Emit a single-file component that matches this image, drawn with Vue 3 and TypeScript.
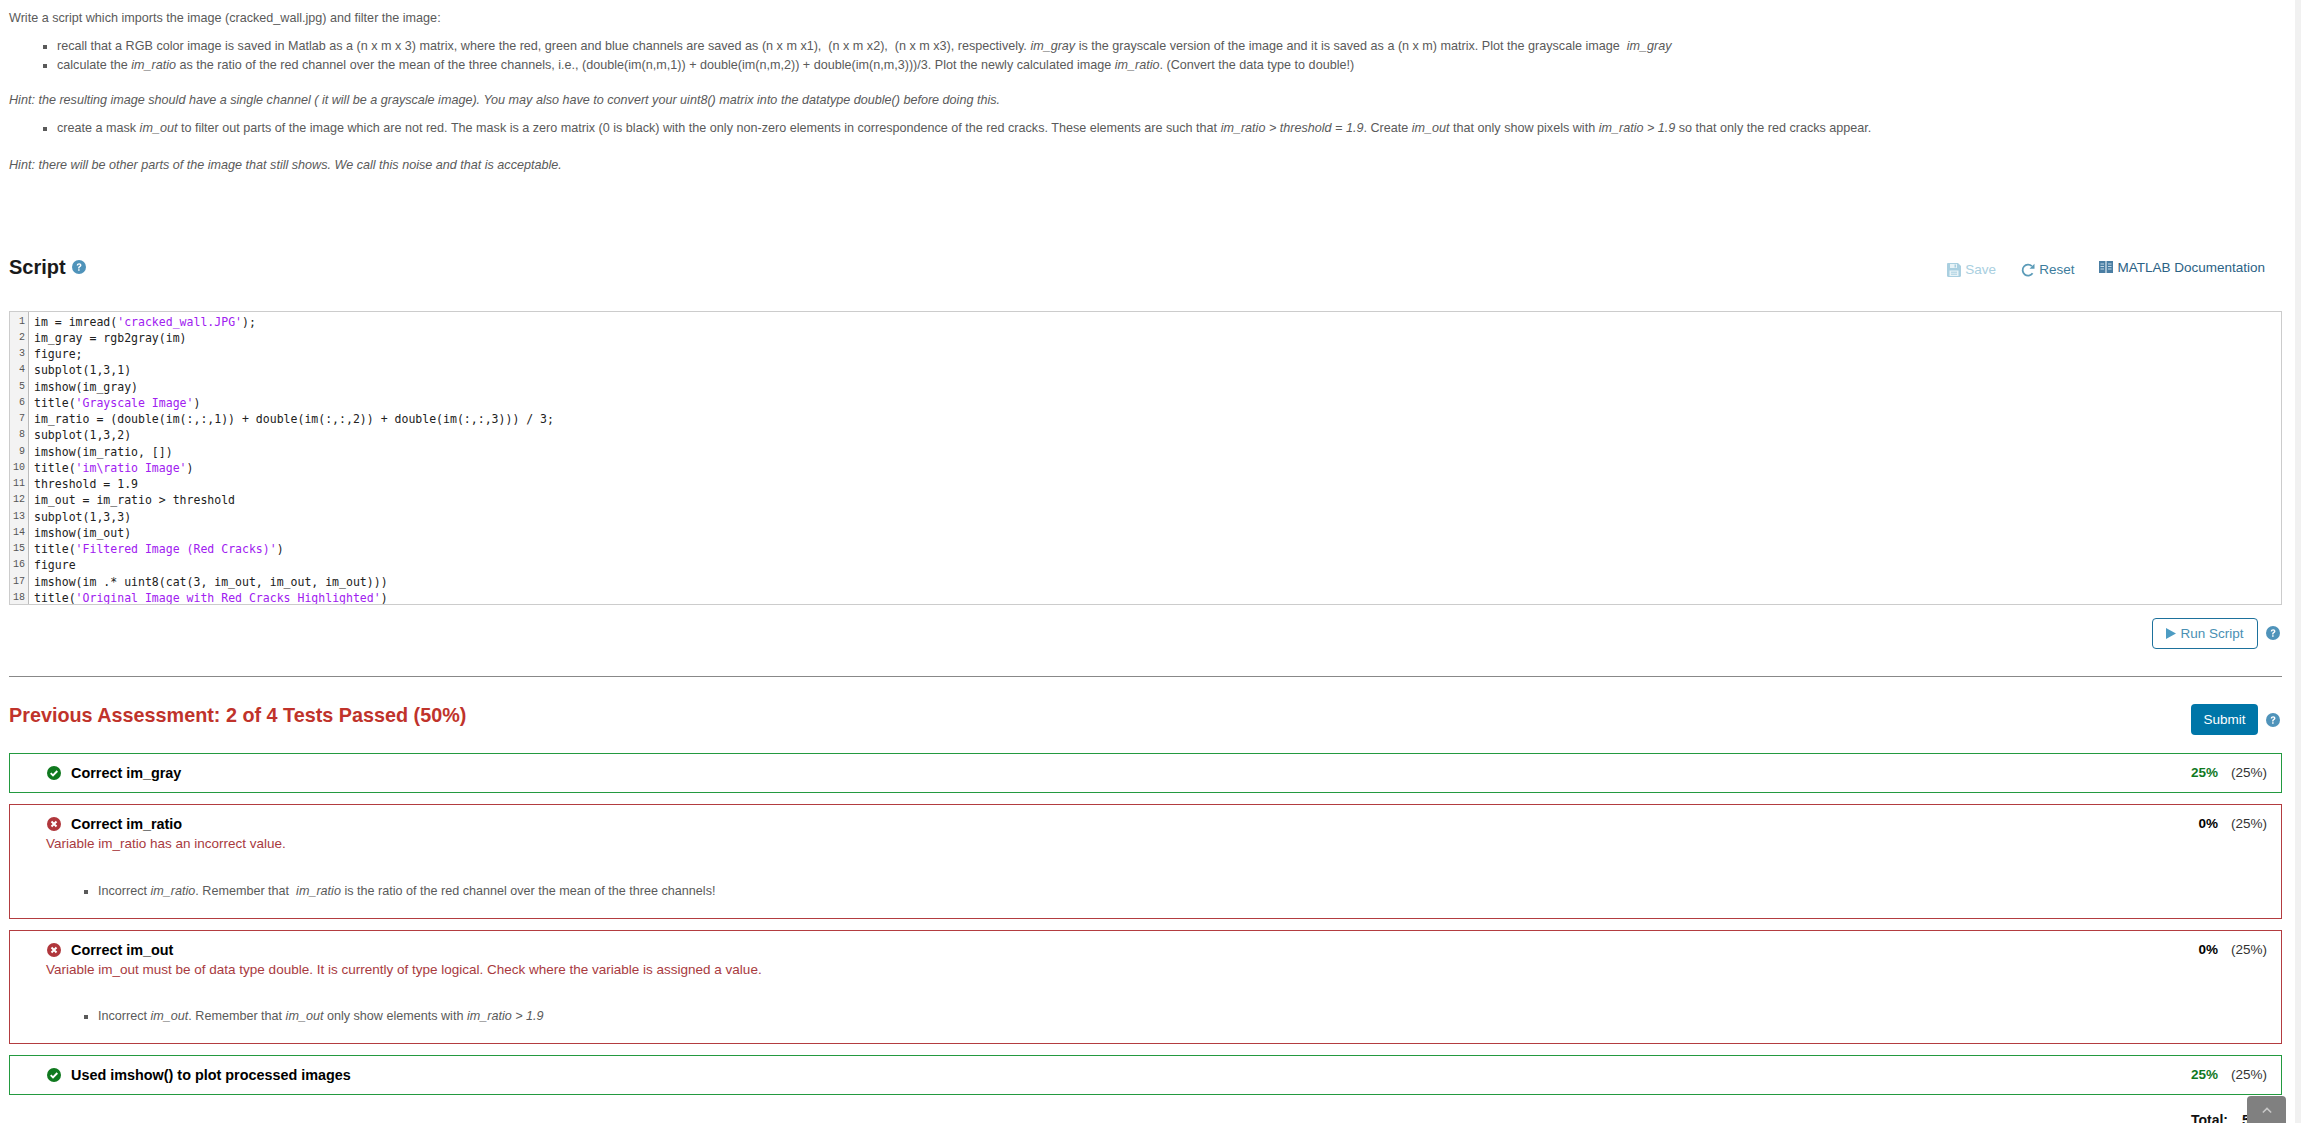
<script setup lang="ts">
const code: [string, string, string][] = [
  ["im = imread(", "'cracked_wall.JPG'", ");"],
  ["im_gray = rgb2gray(im)", "", ""],
  ["figure;", "", ""],
  ["subplot(1,3,1)", "", ""],
  ["imshow(im_gray)", "", ""],
  ["title(", "'Grayscale Image'", ")"],
  ["im_ratio = (double(im(:,:,1)) + double(im(:,:,2)) + double(im(:,:,3))) / 3;", "", ""],
  ["subplot(1,3,2)", "", ""],
  ["imshow(im_ratio, [])", "", ""],
  ["title(", "'im\\ratio Image'", ")"],
  ["threshold = 1.9", "", ""],
  ["im_out = im_ratio > threshold", "", ""],
  ["subplot(1,3,3)", "", ""],
  ["imshow(im_out)", "", ""],
  ["title(", "'Filtered Image (Red Cracks)'", ")"],
  ["figure", "", ""],
  ["imshow(im .* uint8(cat(3, im_out, im_out, im_out)))", "", ""],
  ["title(", "'Original Image with Red Cracks Highlighted'", ")"],
];
</script>

<template>
  <div class="page">
    <section class="prompt">
      <p class="intro">Write a script which imports the image (cracked_wall.jpg) and filter the image:</p>
      <ul class="list first">
        <li>recall that a RGB color image is saved in Matlab as a (n x m x 3) matrix, where the red, green and blue channels are saved as (n x m x1),&nbsp; (n x m x2),&nbsp; (n x m x3), respectively. <i>im_gray</i> is the grayscale version of the image and it is saved as a (n x m) matrix. Plot the grayscale image&nbsp; <i>im_gray</i></li>
        <li>calculate the <i>im_ratio</i> as the ratio of the red channel over the mean of the three channels, i.e., (double(im(n,m,1)) + double(im(n,m,2)) + double(im(n,m,3)))/3. Plot the newly calculated image <i>im_ratio</i>. (Convert the data type to double!)</li>
      </ul>
      <p class="hint"><i>Hint: the resulting image should have a single channel ( it will be a grayscale image). You may also have to convert your uint8() matrix into the datatype double() before doing this.</i></p>
      <ul class="list second">
        <li>create a mask <i>im_out</i> to filter out parts of the image which are not red. The mask is a zero matrix (0 is black) with the only non-zero elements in correspondence of the red cracks. These elements are such that <i>im_ratio &gt; threshold = 1.9</i>. Create <i>im_out</i> that only show pixels with <i>im_ratio &gt; 1.9</i> so that only the red cracks appear.</li>
      </ul>
      <p class="hint last"><i>Hint: there will be other parts of the image that still shows. We call this noise and that is acceptable.</i></p>
    </section>

    <header class="script-head">
      <h2 class="script-title">Script
        <svg class="help small" viewBox="0 0 16 16"><circle cx="8" cy="8" r="8" /><path d="M5.4 6.2C5.5 4.6 6.6 3.7 8.2 3.7c1.5 0 2.6.9 2.6 2.2 0 1-.5 1.5-1.4 2.1-.6.4-.8.7-.8 1.3v.3H7v-.5c0-.9.3-1.4 1.1-2 .7-.5 1-.8 1-1.2 0-.5-.4-.8-1-.8s-1 .4-1.1 1.1zM7 10.7h1.7v1.7H7z" fill="#fff" /></svg>
      </h2>
      <div class="tools">
        <span class="tool save">
          <svg viewBox="0 0 14 14" width="14" height="14"><path d="M0 1.2C0 .5.5 0 1.2 0H11l3 3v9.8c0 .7-.5 1.2-1.2 1.2H1.2C.5 14 0 13.5 0 12.8z" fill="#a9cfe0" /><rect x="3" y="1" width="7" height="4" fill="#e8f3f7" /><rect x="7.5" y="1.5" width="1.5" height="3" fill="#a9cfe0" /><rect x="2.5" y="7.5" width="9" height="5.5" fill="#e8f3f7" /><path d="M4 9.2h6M4 11.2h6" stroke="#a9cfe0" /></svg>
          Save
        </span>
        <span class="tool reset">
          <svg viewBox="0 0 14 14" width="14" height="14"><path d="M11.6 10.3A5.5 5.5 0 1 1 10.9 3.1" fill="none" stroke="#5b9bb8" stroke-width="1.8" /><path d="M13.5.8v5h-5z" fill="#5b9bb8" /></svg>
          Reset
        </span>
        <span class="tool doc">
          <svg viewBox="0 0 14 12" width="14" height="12"><path d="M0 0h6.5v12H0zM7.5 0H14v12H7.5z" fill="#4a7ea3" /><path d="M1.5 3H5M1.5 5.5H5M1.5 8H5M9 3h3.5M9 5.5h3.5M9 8h3.5" stroke="#c4d8e6" /></svg>
          MATLAB Documentation
        </span>
      </div>
    </header>

    <div class="editor">
      <div class="gutter"><div v-for="(_, i) in code" :key="i" class="ln">{{ i + 1 }}</div></div>
      <div class="lines">
        <div v-for="(row, i) in code" :key="i" class="cl">{{ row[0] }}<span class="str">{{ row[1] }}</span>{{ row[2] }}</div>
      </div>
    </div>

    <div class="run-row">
      <button class="run"><svg viewBox="0 0 10 11" width="10" height="11"><path d="M0 0l10 5.5L0 11z" fill="#4d9cc3" /></svg> Run Script</button>
      <svg class="help" viewBox="0 0 16 16"><circle cx="8" cy="8" r="8" /><path d="M5.4 6.2C5.5 4.6 6.6 3.7 8.2 3.7c1.5 0 2.6.9 2.6 2.2 0 1-.5 1.5-1.4 2.1-.6.4-.8.7-.8 1.3v.3H7v-.5c0-.9.3-1.4 1.1-2 .7-.5 1-.8 1-1.2 0-.5-.4-.8-1-.8s-1 .4-1.1 1.1zM7 10.7h1.7v1.7H7z" fill="#fff" /></svg>
    </div>

    <hr class="rule" />

    <div class="assess-head">
      <h2 class="assess-title">Previous Assessment: 2 of 4 Tests Passed (50%)</h2>
      <div class="submit-wrap">
        <button class="submit">Submit</button>
        <svg class="help" viewBox="0 0 16 16"><circle cx="8" cy="8" r="8" /><path d="M5.4 6.2C5.5 4.6 6.6 3.7 8.2 3.7c1.5 0 2.6.9 2.6 2.2 0 1-.5 1.5-1.4 2.1-.6.4-.8.7-.8 1.3v.3H7v-.5c0-.9.3-1.4 1.1-2 .7-.5 1-.8 1-1.2 0-.5-.4-.8-1-.8s-1 .4-1.1 1.1zM7 10.7h1.7v1.7H7z" fill="#fff" /></svg>
      </div>
    </div>

    <div class="test pass">
      <div class="test-main">
        <div class="test-title"><svg class="status" viewBox="0 0 14 14"><circle cx="7" cy="7" r="7" fill="#10791f" /><path d="M3.7 7.2l2.3 2.3 4.3-4.5" fill="none" stroke="#fff" stroke-width="1.9" /></svg>Correct im_gray</div>
      </div>
      <div class="score"><b class="green">25%</b><span>(25%)</span></div>
    </div>

    <div class="test fail">
      <div class="test-main">
        <div class="test-title"><svg class="status" viewBox="0 0 14 14"><circle cx="7" cy="7" r="7" fill="#b0373c" /><path d="M4.5 4.5l5 5M9.5 4.5l-5 5" fill="none" stroke="#fff" stroke-width="2" /></svg>Correct im_ratio</div>
        <div class="msg">Variable im_ratio has an incorrect value.</div>
        <ul class="feedback"><li>Incorrect <i>im_ratio</i>. Remember that&nbsp; <i>im_ratio</i> is the ratio of the red channel over the mean of the three channels!</li></ul>
      </div>
      <div class="score"><b>0%</b><span>(25%)</span></div>
    </div>

    <div class="test fail short">
      <div class="test-main">
        <div class="test-title"><svg class="status" viewBox="0 0 14 14"><circle cx="7" cy="7" r="7" fill="#b0373c" /><path d="M4.5 4.5l5 5M9.5 4.5l-5 5" fill="none" stroke="#fff" stroke-width="2" /></svg>Correct im_out</div>
        <div class="msg">Variable im_out must be of data type double. It is currently of type logical. Check where the variable is assigned a value.</div>
        <ul class="feedback"><li>Incorrect <i>im_out</i>. Remember that <i>im_out</i> only show elements with <i>im_ratio &gt; 1.9</i></li></ul>
      </div>
      <div class="score"><b>0%</b><span>(25%)</span></div>
    </div>

    <div class="test pass">
      <div class="test-main">
        <div class="test-title"><svg class="status" viewBox="0 0 14 14"><circle cx="7" cy="7" r="7" fill="#10791f" /><path d="M3.7 7.2l2.3 2.3 4.3-4.5" fill="none" stroke="#fff" stroke-width="1.9" /></svg>Used imshow() to plot processed images</div>
      </div>
      <div class="score"><b class="green">25%</b><span>(25%)</span></div>
    </div>

    <div class="total"><b>Total:</b><b class="total-val">50%</b></div>

    <div class="to-top"><svg viewBox="0 0 12 8" width="10" height="7"><path d="M1 6.5l5-5 5 5" fill="none" stroke="#c8c8c8" stroke-width="1.8" /></svg></div>
    <div class="scrollbar"></div>
  </div>
</template>

<style>
html, body { margin: 0; height: 100%; overflow: hidden; background: #fff; }
</style>

<style scoped>
.page { position: relative; height: 1123px; overflow: hidden; box-sizing: border-box; padding: 0 19px 0 9px; font: 12.6px/16px "Liberation Sans", Arial, sans-serif; color: #5a5a5a; }
p, ul, h2 { margin: 0; }
.prompt { height: 240px; padding-top: 10px; box-sizing: border-box; }
.list { padding: 0 0 0 48px; list-style: square; }
.list li { height: 19px; line-height: 19px; }
.list.first { margin-top: 11px; }
.hint { margin-top: 17px; }
.list.second { margin-top: 11px; }
.hint.last { margin-top: 19px; }
.script-head { display: flex; justify-content: space-between; height: 71px; }
.script-title { font-size: 20px; line-height: 24px; color: #1a1a1a; display: flex; align-items: center; gap: 6px; margin-top: 15px; height: 24px; font-weight: 700; }
.help { width: 14px; height: 14px; fill: #4f93ba; flex: none; }
.tools { display: flex; gap: 25px; padding-right: 17px; margin-top: 21px; }
.tool { display: inline-flex; align-items: flex-start; gap: 4px; font-size: 13.5px; line-height: 18px; }
.tool svg { margin-top: 2px; }
.save { color: #a9cfe0; }
.reset { color: #3d7c9c; }
.doc { color: #2b6285; margin-top: -2px; }
.editor { display: flex; height: 294px; box-sizing: border-box; border: 1px solid #ccc; background: #fff; overflow: hidden; }
.gutter { width: 19px; flex: none; background: #f3f3f3; border-right: 1px solid #bbb; text-align: right; padding: 1.5px 3px 0 0; box-sizing: border-box; }
.ln { font: 10px/16.25px "Liberation Mono", monospace; color: #555; }
.lines { padding: 1.5px 0 0 5px; }
.cl { font: 11.53px/16.25px "DejaVu Sans Mono", monospace; color: #212121; white-space: pre; }
.str { color: #a020f0; }
.run-row { display: flex; justify-content: flex-end; align-items: center; gap: 8px; margin-top: 13px; height: 30px; padding-right: 2px; }
button { font-family: inherit; cursor: pointer; }
.run { width: 106px; height: 31px; border: 1px solid #1d719c; border-radius: 4px; background: #fff; color: #4a8fb3; font-size: 13.5px; display: flex; align-items: center; justify-content: center; gap: 4px; padding: 0; }
.rule { border: 0; border-top: 1px solid #888; margin: 28px 0 0; height: 0; }
.assess-head { display: flex; justify-content: space-between; align-items: flex-start; height: 76px; }
.assess-title { font-size: 19.8px; line-height: 24px; color: #c0332b; margin-top: 26px; font-weight: 700; }
.submit-wrap { display: flex; align-items: center; gap: 8px; margin-top: 27px; padding-right: 2px; }
.submit { width: 67px; height: 31px; border: 0; border-radius: 4px; background: #0076a8; color: #fff; font-size: 13.5px; padding: 0; }
.test { display: flex; justify-content: space-between; border: 1px solid; box-sizing: border-box; padding: 0 14px 0 36px; margin-bottom: 11px; }
.pass { border-color: #239a40; height: 40px; }
.fail { border-color: #b33c40; height: 115px; }
.fail.short { height: 114px; }
.test-title { display: flex; align-items: center; font-weight: 700; font-size: 14.4px; color: #000; height: 16px; margin-top: 11px; }
.status { width: 14px; height: 14px; margin-left: 1px; margin-right: 10px; flex: none; }
.msg { color: #a83a3e; font-size: 13.5px; line-height: 18px; margin-top: 3px; }
.feedback { list-style: square; padding-left: 52px; margin-top: 30px; }
.short .feedback { margin-top: 29px; }
.score { display: flex; gap: 13px; font-size: 13.5px; line-height: 16px; margin-top: 11px; color: #333; }
.score b { color: #000; }
.score b.green { color: #10791f; }
.total { display: flex; justify-content: flex-end; gap: 14px; padding-right: 4px; margin-top: 17px; font-size: 14px; color: #111; }
.total-val { width: 36px; }
.to-top { position: absolute; right: 15px; bottom: 0; width: 39px; height: 27px; background: #808080; border-radius: 4px 4px 0 0; display: flex; justify-content: center; padding-top: 11px; box-sizing: border-box; }
.scrollbar { position: absolute; right: 0; top: 0; bottom: 0; width: 6px; background: #f1f1f1; }
</style>
